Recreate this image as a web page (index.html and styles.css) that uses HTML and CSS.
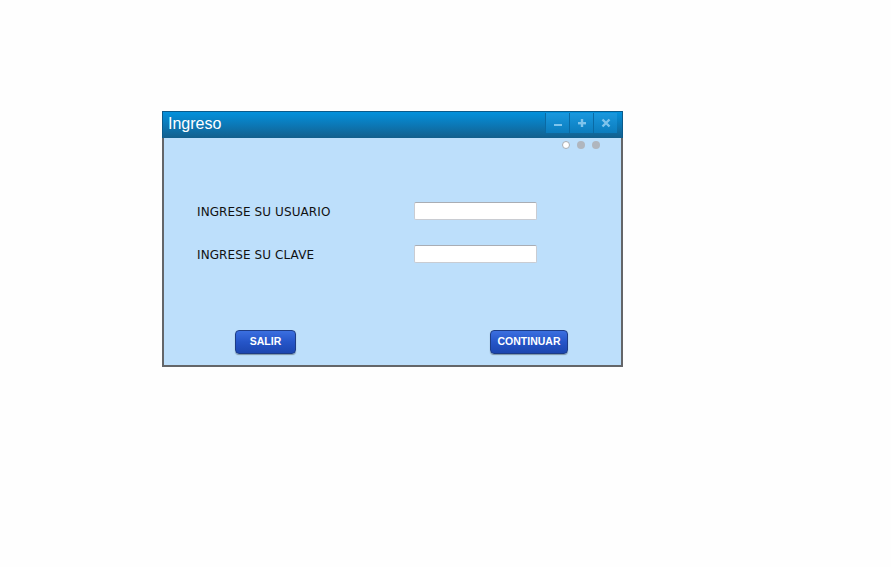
FILE: index.html
```html
<!DOCTYPE html>
<html>
<head>
<meta charset="utf-8">
<link rel="stylesheet" href="styles.css">
</head>
<body>
<div class="window">
  <div class="titlebar">
    <span class="title">Ingreso</span>
    <div class="controls">
      <span class="ctl"><svg width="10" height="10" viewBox="0 0 10 10"><rect x="1" y="6" width="8" height="2" fill="#7fc4ec"/></svg></span>
      <span class="ctl"><svg width="10" height="10" viewBox="0 0 10 10"><rect x="1" y="4" width="8" height="2.4" fill="#7fc4ec"/><rect x="3.8" y="1" width="2.4" height="8" fill="#7fc4ec"/></svg></span>
      <span class="ctl"><svg width="10" height="10" viewBox="0 0 10 10"><path d="M1.5 1.5 L8.5 8.5 M8.5 1.5 L1.5 8.5" stroke="#7fc4ec" stroke-width="2.4"/></svg></span>
    </div>
  </div>
  <div class="content">
    <div class="dots">
      <span class="dot active"></span>
      <span class="dot"></span>
      <span class="dot"></span>
    </div>
    <div class="form">
      <label class="label">INGRESE SU USUARIO</label>
      <input class="field" type="text">
      <label class="label">INGRESE SU CLAVE</label>
      <input class="field" type="password">
    </div>
    <div class="actions">
      <button class="btn btn-exit">SALIR</button>
      <button class="btn btn-go">CONTINUAR</button>
    </div>
  </div>
</div>
</body>
</html>
```
FILE: styles.css
```css
html, body {
  margin: 0;
  padding: 0;
  background: #fefefe;
}
body {
  padding: 111px 0 0 162px;
  font-family: "Liberation Sans", Arial, sans-serif;
}
.window {
  width: 461px;
}
.titlebar {
  height: 27px;
  box-sizing: border-box;
  background: linear-gradient(#0391dc, #0c78b6 50%, #135f8c);
  border: 1px solid #0b5a8a;
  border-bottom: none;
  display: flex;
  align-items: flex-start;
  justify-content: space-between;
  padding-left: 5px;
  padding-right: 5px;
}
.title {
  color: #fff;
  font-size: 16px;
  line-height: 24px;
}
.controls {
  display: flex;
  gap: 1px;
  margin-top: 1px;
}
.ctl {
  width: 23px;
  height: 20px;
  background: linear-gradient(#1a98de, #0c7cbd);
  box-shadow: -1px 0 0 #0a6aa4;
  display: flex;
  align-items: center;
  justify-content: center;
}
.content {
  height: 229px;
  box-sizing: border-box;
  background: #bddffb;
  border: 2px solid #646669;
  border-top: none;
  display: flex;
  flex-direction: column;
}
.dots {
  display: flex;
  justify-content: flex-end;
  gap: 7px;
  padding: 3px 21px 0 0;
}
.dot {
  width: 8px;
  height: 8px;
  border-radius: 50%;
  background: #b0b6be;
}
.dot.active {
  box-sizing: border-box;
  background: #fff;
  border: 1px solid #a8adb3;
}
.form {
  display: grid;
  grid-template-columns: 217px 123px;
  row-gap: 25px;
  align-items: center;
  margin: 53px 0 0 33px;
}
.label {
  font-family: "Comic Sans MS", "DejaVu Sans", sans-serif;
  font-size: 12px;
  color: #111;
  letter-spacing: 0.1px;
  padding-top: 2px;
}
.field {
  width: 123px;
  height: 18px;
  box-sizing: border-box;
  margin: 0;
  border: 1px solid #c9ccd2;
  border-top-color: #a9adb4;
  border-radius: 2px;
  background: #fff;
  outline: none;
}
.actions {
  display: flex;
  justify-content: space-between;
  margin: 67px 0 0 71px;
  padding-right: 53px;
}
.btn {
  height: 24px;
  box-sizing: border-box;
  border: 1px solid #1d3c86;
  border-radius: 4px;
  background: linear-gradient(#3b6fe0, #2555c8 50%, #1c46b0);
  color: #fff;
  font-family: "Liberation Sans", Arial, sans-serif;
  font-weight: bold;
  font-size: 10.5px;
  padding: 0 0 2px;
  box-shadow: 0 1px 1px rgba(0,0,0,0.35);
}
.btn-exit { width: 61px; }
.btn-go { width: 78px; }
```
